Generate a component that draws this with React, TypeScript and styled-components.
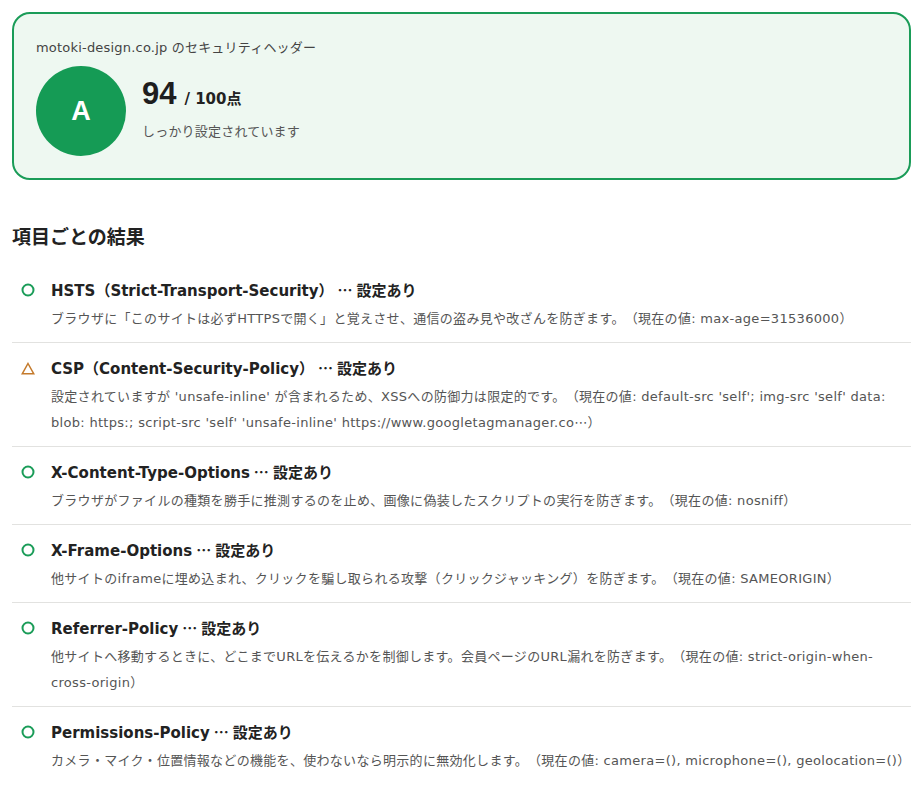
import React from 'react'
import styled, { createGlobalStyle } from 'styled-components'

const GlobalStyle = createGlobalStyle`
  body {
    margin: 0;
    background: #ffffff;
    font-family: "DejaVu Sans", "Noto Sans CJK JP", sans-serif;
    color: #222;
    text-spacing-trim: space-all;
  }
`;

const Page = styled.div`
  padding: 12px 13px 12px 12px;
`;

const SummaryCard = styled.section`
  border: 2px solid #1a9c58;
  border-radius: 18px;
  background: #eef8f1;
  padding: 24px 22px 22px;
`;

const SiteLabel = styled.div`
  font-size: 13px;
  letter-spacing: 0.2px;
  color: #444;
  line-height: 20px;
`;

const ScoreRow = styled.div`
  display: flex;
  align-items: flex-start;
  gap: 16px;
  margin-top: 8px;
`;

const GradeBadge = styled.div`
  width: 90px;
  height: 90px;
  border-radius: 50%;
  background: #159b55;
  color: #fff;
  display: flex;
  align-items: center;
  justify-content: center;
  font-family: "Liberation Sans", sans-serif;
  font-weight: 700;
  font-size: 27px;
  flex-shrink: 0;
`;

const ScoreInfo = styled.div`
  padding-top: 10px;
`;

const ScoreLine = styled.div`
  display: flex;
  align-items: baseline;
  gap: 8px;
  line-height: 36px;
`;

const ScoreValue = styled.span`
  font-family: "Liberation Sans", sans-serif;
  font-size: 31px;
  font-weight: 700;
  color: #1e1e1e;
`;

const ScoreMax = styled.span`
  font-size: 15px;
  font-weight: 700;
  color: #222;
`;

const ScoreNote = styled.div`
  margin-top: 4px;
  font-size: 13px;
  letter-spacing: 0.2px;
  color: #555;
`;

const SectionTitle = styled.h2`
  margin: 42px 0 30px;
  font-family: "Noto Sans CJK JP", sans-serif;
  font-size: 19px;
  font-weight: 700;
  color: #222;
`;

const List = styled.ul`
  list-style: none;
  margin: 0;
  padding: 0;
`;

const Item = styled.li`
  display: grid;
  grid-template-columns: 39px 1fr;
  padding: 14px 0 10px;
  border-bottom: 1px solid #e2e2e0;
  &:first-child {
    padding-top: 0;
  }
  &:last-child {
    border-bottom: none;
  }
`;

const Mark = styled.span`
  display: flex;
  align-items: center;
  height: 22px;
  padding-left: 9px;
`;

const ItemTitle = styled.div`
  font-size: 15px;
  font-weight: 700;
  line-height: 22px;
  color: #222;
`;

const Dots = styled.span`
  font-family: "Noto Sans CJK JP", sans-serif;
  margin: 0 4px;
`;

const ItemDesc = styled.p`
  margin: 4px 0 0;
  font-size: 13px;
  letter-spacing: 0.3px;
  line-height: 26px;
  color: #555;
`;

const OkIcon = () => (
  <svg width="14" height="14" viewBox="0 0 14 14">
    <circle cx="7" cy="7" r="5.5" fill="none" stroke="#1a9c58" strokeWidth="2" />
  </svg>
);

const WarnIcon = () => (
  <svg width="14" height="13" viewBox="0 0 14 13">
    <path d="M7 1.5 L12.8 11.8 H1.2 Z" fill="none" stroke="#c47a2c" strokeWidth="1.5" strokeLinejoin="miter" />
  </svg>
);

const items = [
  {
    name: 'HSTS（Strict-Transport-Security）',
    desc: 'ブラウザに「このサイトは必ずHTTPSで開く」と覚えさせ、通信の盗み見や改ざんを防ぎます。（現在の値: max-age=31536000）',
  },
  {
    warn: true,
    name: 'CSP（Content-Security-Policy）',
    desc: "設定されていますが 'unsafe-inline' が含まれるため、XSSへの防御力は限定的です。（現在の値: default-src 'self'; img-src 'self' data: blob: https:; script-src 'self' 'unsafe-inline' https://www.googletagmanager.co⋯）",
  },
  {
    name: 'X-Content-Type-Options',
    desc: 'ブラウザがファイルの種類を勝手に推測するのを止め、画像に偽装したスクリプトの実行を防ぎます。（現在の値: nosniff）',
  },
  {
    name: 'X-Frame-Options',
    desc: '他サイトのiframeに埋め込まれ、クリックを騙し取られる攻撃（クリックジャッキング）を防ぎます。（現在の値: SAMEORIGIN）',
  },
  {
    name: 'Referrer-Policy',
    desc: '他サイトへ移動するときに、どこまでURLを伝えるかを制御します。会員ページのURL漏れを防ぎます。（現在の値: strict-origin-when-cross-origin）',
  },
  {
    name: 'Permissions-Policy',
    desc: 'カメラ・マイク・位置情報などの機能を、使わないなら明示的に無効化します。（現在の値: camera=(), microphone=(), geolocation=()）',
  },
];

const App = () => {
  return (
    <Page lang="ja">
      <GlobalStyle />
      <SummaryCard>
        <SiteLabel>motoki-design.co.jp のセキュリティヘッダー</SiteLabel>
        <ScoreRow>
          <GradeBadge>A</GradeBadge>
          <ScoreInfo>
            <ScoreLine>
              <ScoreValue>94</ScoreValue>
              <ScoreMax>/ 100点</ScoreMax>
            </ScoreLine>
            <ScoreNote>しっかり設定されています</ScoreNote>
          </ScoreInfo>
        </ScoreRow>
      </SummaryCard>
      <SectionTitle>項目ごとの結果</SectionTitle>
      <List>
        {items.map(item => (
          <Item key={item.name}>
            <Mark>{item.warn ? <WarnIcon /> : <OkIcon />}</Mark>
            <div>
              <ItemTitle>
                {item.name}
                <Dots>⋯</Dots>
                設定あり
              </ItemTitle>
              <ItemDesc>{item.desc}</ItemDesc>
            </div>
          </Item>
        ))}
      </List>
    </Page>
  )
}

export default App
